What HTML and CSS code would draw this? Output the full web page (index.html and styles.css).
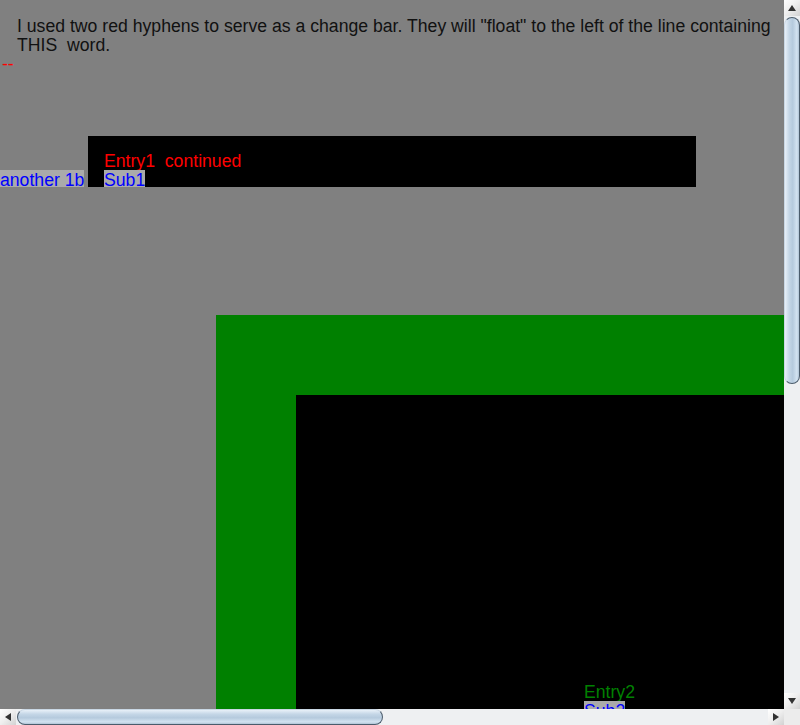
FILE: index.html
```html
<!DOCTYPE html>
<html>
<head>
<meta charset="utf-8">
<title>Change bar float test</title>
<link rel="stylesheet" href="styles.css">
</head>
<body>
<div class="screen">
  <div class="top">
    <div class="viewport">
      <p class="intro">I used two red hyphens to serve as a change bar. They will "float" to the left of the line containing THIS&nbsp; word.</p>
      <div class="change">--</div>
      <div class="entry1-row">
        <div class="aside"><span class="sub">another 1b</span></div>
        <div class="entry1">
          <div class="red">Entry1&nbsp; continued</div>
          <div><span class="sub">Sub1</span></div>
        </div>
      </div>
      <div class="entry2">
        <div class="entry2-inner">
          <div class="green">Entry2</div>
          <div><span class="sub">Sub2</span></div>
        </div>
      </div>
    </div>
    <div class="vbar">
      <div class="btn"><span class="tri tri-up"></span></div>
      <div class="vtrack"><div class="vthumb"></div></div>
      <div class="btn"><span class="tri tri-down"></span></div>
    </div>
  </div>
  <div class="bottom">
    <div class="hbar">
      <div class="btn"><span class="tri tri-left"></span></div>
      <div class="htrack"><div class="hthumb"></div></div>
      <div class="btn"><span class="tri tri-right"></span></div>
    </div>
    <div class="corner"></div>
  </div>
</div>
</body>
</html>
```

FILE: styles.css
```css
html, body {
  margin: 0;
  padding: 0;
  background: #808080;
  overflow: hidden;
}

.screen {
  width: 800px;
  height: 725px;
  display: flex;
  flex-direction: column;
  font-family: "Liberation Sans", Arial, sans-serif;
  font-size: 17.65px;
  line-height: 19px;
}

.top {
  display: flex;
  height: 709px;
}

.viewport {
  width: 784px;
  height: 709px;
  overflow: hidden;
  background: #808080;
  flex: none;
}

.intro {
  margin: 0;
  padding: 17px 8px 0 17px;
  color: #111;
}

.change {
  color: #ff0000;
  padding-left: 2px;
  height: 19px;
}

.entry1-row {
  display: flex;
  margin-top: 62px;
  height: 51px;
  overflow: hidden;
}

.aside {
  width: 88px;
  flex: none;
  padding-top: 35px;
  box-sizing: border-box;
  white-space: nowrap;
}

.entry1 {
  width: 608px;
  flex: none;
  background: #000;
  padding: 16px 0 0 16px;
  box-sizing: border-box;
}

.red {
  color: #ff0000;
}

.sub {
  color: #0000ff;
  background: #aaaaaa;
}

.entry2 {
  margin: 128px 0 0 216px;
  width: 700px;
  padding: 80px 0 0 80px;
  background: #008000;
}

.entry2-inner {
  background: #000;
  padding: 288px 0 0 288px;
  height: 400px;
}

.green {
  color: #008000;
}

/* scrollbars */
.vbar {
  width: 16px;
  flex: none;
  display: flex;
  flex-direction: column;
  background: #eef0f2;
}

.btn {
  width: 16px;
  height: 16px;
  flex: none;
  display: flex;
  align-items: center;
  justify-content: center;
  background: linear-gradient(135deg, #ffffff 0%, #eeeeee 50%, #d2d2d2 100%);
  box-sizing: border-box;
}

.tri {
  width: 0;
  height: 0;
  display: block;
}

.tri-up {
  border-left: 4px solid transparent;
  border-right: 4px solid transparent;
  border-bottom: 6px solid #333;
}

.tri-down {
  border-left: 4px solid transparent;
  border-right: 4px solid transparent;
  border-top: 6px solid #333;
}

.tri-left {
  border-top: 4px solid transparent;
  border-bottom: 4px solid transparent;
  border-right: 6px solid #333;
}

.tri-right {
  border-top: 4px solid transparent;
  border-bottom: 4px solid transparent;
  border-left: 6px solid #333;
}

.vtrack {
  flex: 1;
  padding-top: 1px;
  background: #eef0f2;
}

.vthumb {
  height: 367px;
  width: 16px;
  box-sizing: border-box;
  border: 1px solid #4b5c6c;
  border-left-color: #c9d7e4;
  border-radius: 8px;
  background: linear-gradient(to right, #e8f0f8 0%, #c4d6e6 30%, #b5cadd 55%, #d3e3f1 85%, #b0c4d6 100%);
}

.bottom {
  display: flex;
  height: 16px;
}

.hbar {
  width: 784px;
  flex: none;
  display: flex;
  background: #eef0f2;
}

.htrack {
  flex: 1;
  padding-left: 1px;
  background: #eef0f2;
}

.hthumb {
  width: 366px;
  height: 16px;
  box-sizing: border-box;
  border: 1px solid #4b5c6c;
  border-top-color: #c9d7e4;
  border-radius: 8px;
  background: linear-gradient(to bottom, #e8f0f8 0%, #c4d6e6 30%, #b5cadd 55%, #d3e3f1 85%, #b0c4d6 100%);
}

.corner {
  width: 16px;
  height: 16px;
  background: #ececec;
}
```
